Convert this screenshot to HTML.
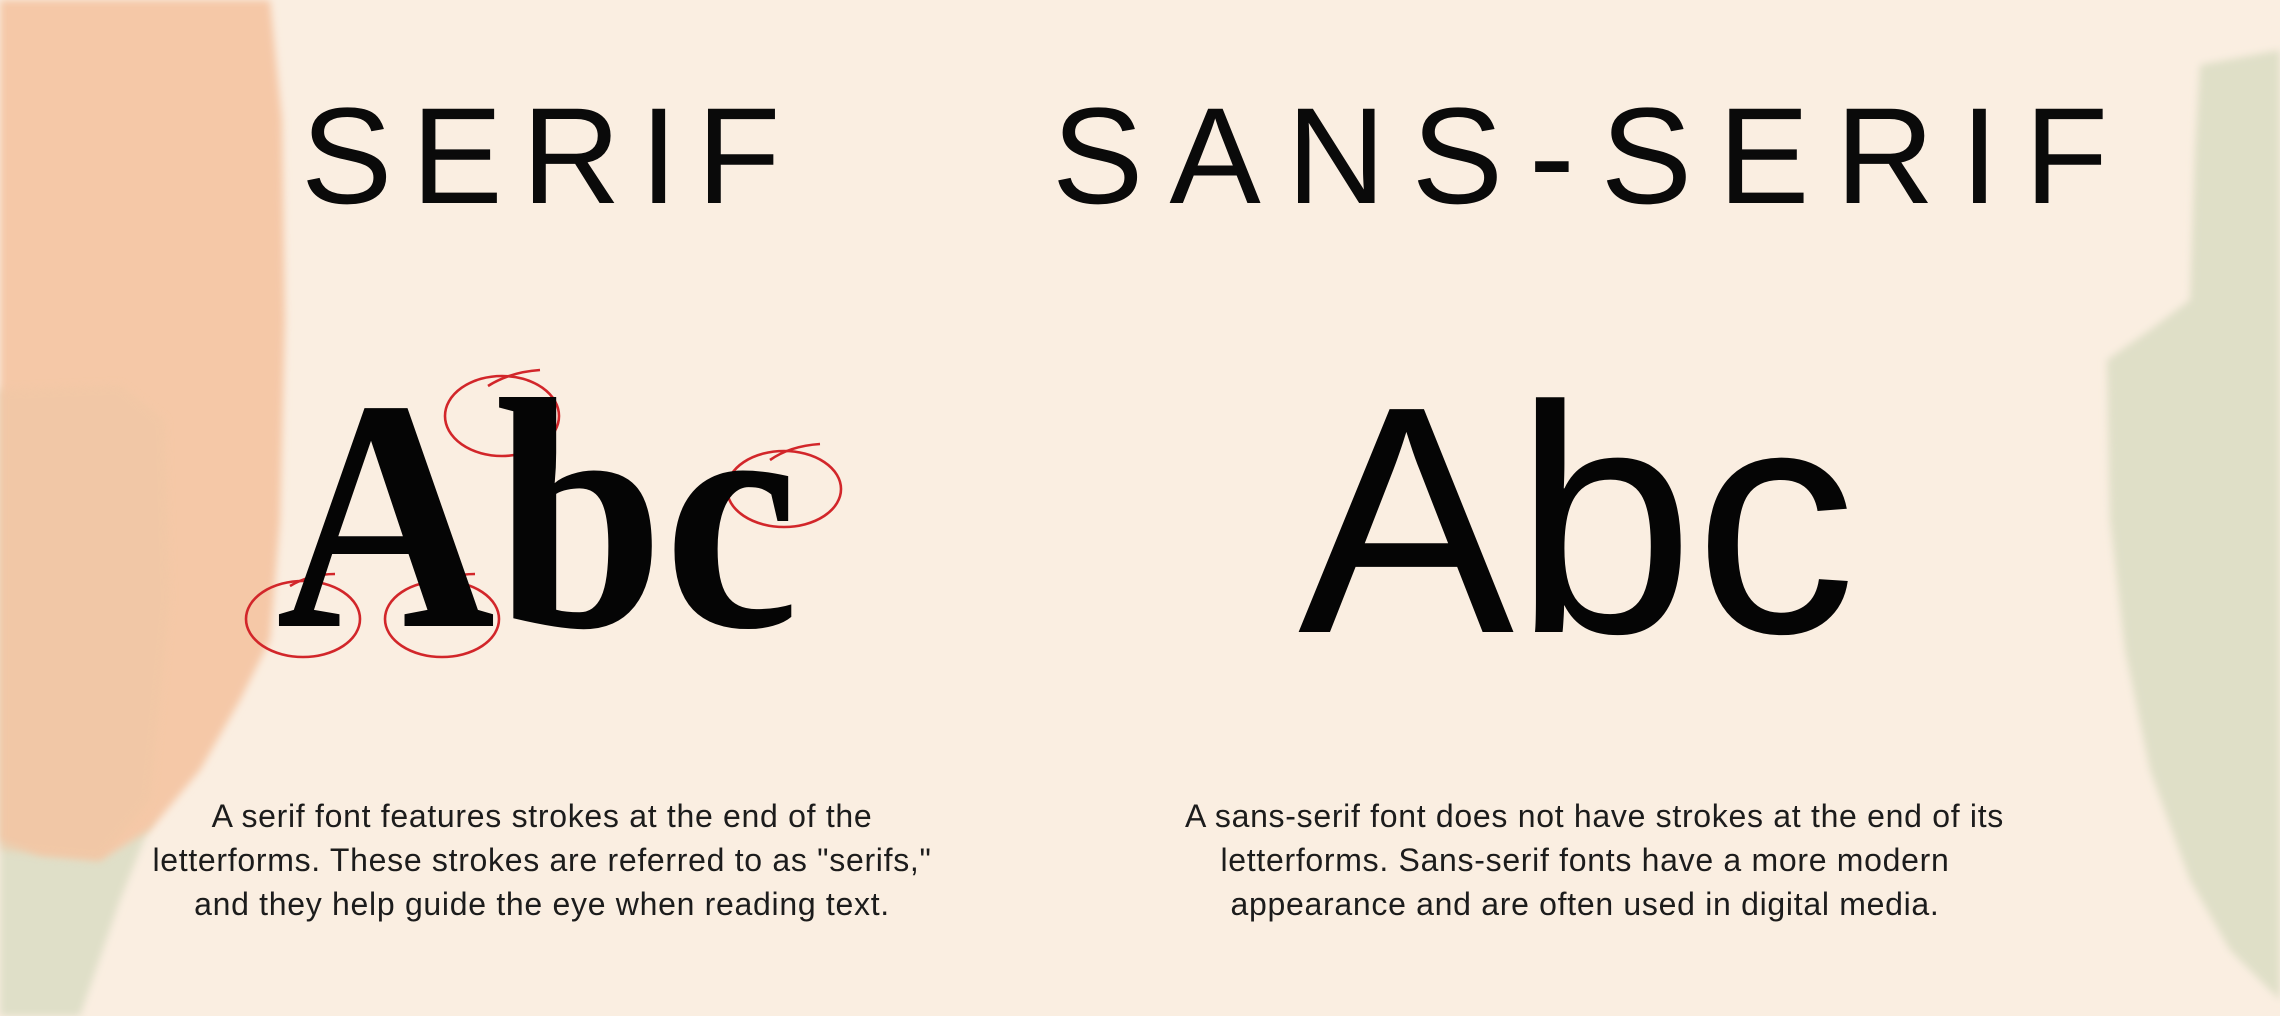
<!DOCTYPE html>
<html><head><meta charset="utf-8"><style>
html,body{margin:0;padding:0}
body{width:2280px;height:1016px;background:#FAEEE1;position:relative;overflow:hidden;font-family:"Liberation Sans",sans-serif;color:#111}
svg.bg{position:absolute;left:0;top:0}
.t{position:absolute;top:88px;font-size:137px;line-height:1;white-space:nowrap;color:#0a0a0a}
.p{position:absolute;top:794px;font-size:32px;line-height:44px;text-align:center;white-space:nowrap;color:#1c1c1c;letter-spacing:0.7px}
</style></head><body>
<svg class="bg" width="2280" height="1016">
<defs><filter id="b"><feGaussianBlur stdDeviation="4"/></filter></defs>
<path filter="url(#b)" fill="#DFDFC8" d="M0,390 L120,380 L172,420 L178,650 L160,800 L120,900 L80,1016 L0,1016Z"/>
<path filter="url(#b)" fill="#F5C8A7" d="M0,0 L270,0 L282,120 L285,320 L280,520 L270,640 L240,700 L200,770 L150,830 L100,860 L40,855 L0,840Z"/>
<path filter="url(#b)" fill="#EFC7A6" opacity="0.6" d="M0,390 L120,385 L165,420 L170,600 L150,800 L100,860 L0,850Z"/>
<path filter="url(#b)" fill="#DFDFC7" d="M2200,65 L2280,50 L2280,1000 L2230,950 L2190,880 L2150,770 L2125,650 L2110,520 L2107,360 L2150,330 L2190,300 L2195,150Z"/>
<g fill="none" stroke="#D2262A" stroke-width="2.6">
<ellipse cx="303" cy="619" rx="57" ry="38"/>
<path d="M290,586 Q310,574 335,574"/>
<ellipse cx="442" cy="619" rx="57" ry="38"/>
<path d="M430,586 Q450,574 475,574"/>
<ellipse cx="502" cy="416" rx="57" ry="40"/>
<path d="M488,386 Q510,372 540,370"/>
<ellipse cx="784" cy="489" rx="57" ry="38"/>
<path d="M770,460 Q790,446 820,444"/>
</g>
</svg>
<div class="t" style="left:301px;letter-spacing:19px">SERIF</div>
<div class="t" style="left:1052px;letter-spacing:26px">SANS-SERIF</div>
<div style="position:absolute;left:276px;top:351px;font-family:'Liberation Serif',serif;font-weight:bold;font-size:330px;line-height:1;transform:scaleX(0.92);transform-origin:left top;white-space:nowrap;color:#050505">Abc</div>
<div style="position:absolute;left:1298px;top:358px;font-size:324px;line-height:1;white-space:nowrap;color:#050505">Abc</div>
<div class="p" style="left:142px;width:800px">A serif font features strokes at the end of the<br>letterforms. These strokes are referred to as "serifs,"<br>and they help guide the eye when reading text.</div>
<div class="p" style="left:1185px;width:800px">A sans-serif font does not have strokes at the end of its<br>letterforms. Sans-serif fonts have a more modern<br>appearance and are often used in digital media.</div>
</body></html>
